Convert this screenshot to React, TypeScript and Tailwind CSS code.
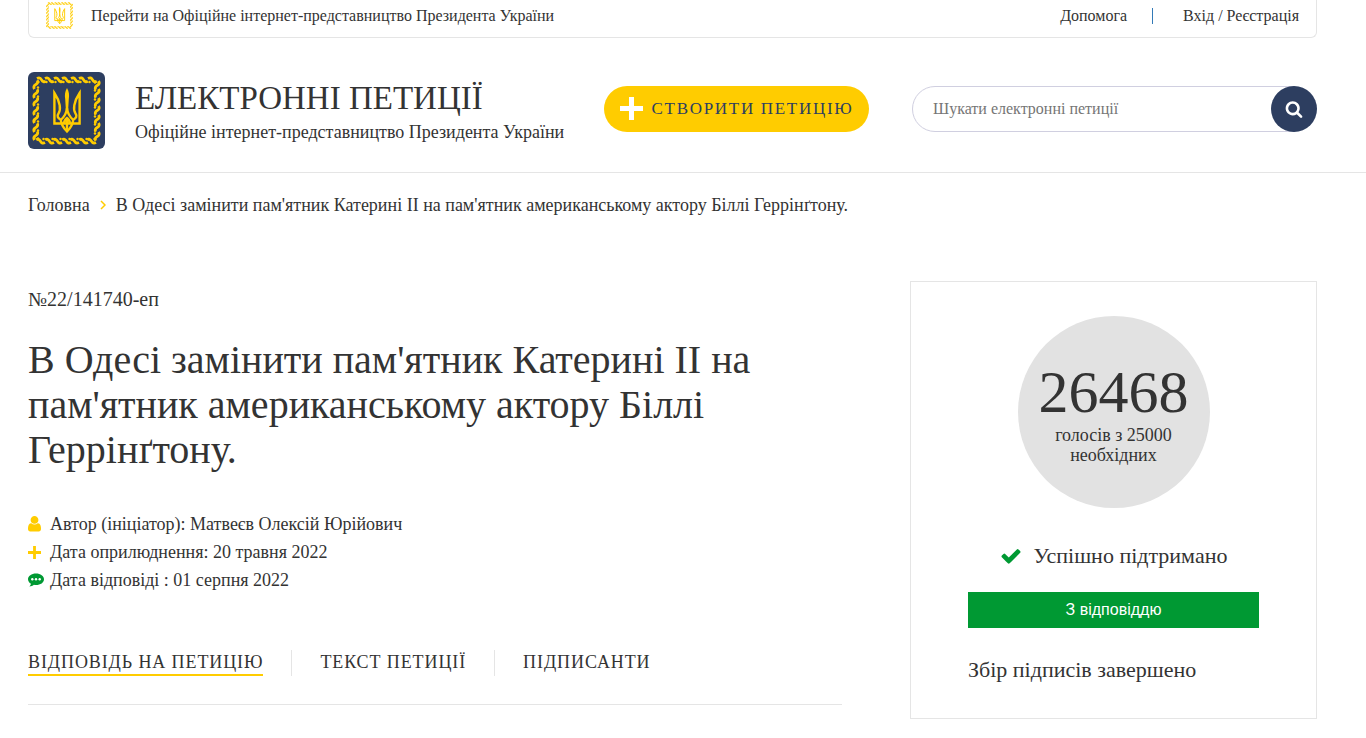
import type { ReactNode } from "react";

type IconProps = { className?: string };

// Leaf garland that runs along one side of the emblem frame
const LEAVES = [13, 21, 30, 38, 47, 55, 64];
const SIDES = [0, 90, 180, 270];

function Emblem({ className, viewBox = "0 0 77 77" }: IconProps & { viewBox?: string }) {
  return (
    <svg viewBox={viewBox} className={className} aria-hidden="true">
      {SIDES.map((side) => (
        <g key={side} transform={`rotate(${side} 38.5 38.5)`}>
          {LEAVES.map((x) => (
            <g key={x}>
              <path
                d={`M${x - 4} 6.4q3-1.600 4.600 1.400t4.200 1.400`}
                stroke="#fc0"
                strokeWidth="2.800"
                fill="none"
              />
              <circle cx={x - 2.5} cy="10" r="1.2" fill="#fc0" />
            </g>
          ))}
        </g>
      ))}
      <g fill="none" stroke="#fc0" strokeWidth="2.4" strokeLinejoin="miter">
        <path d="M32.5 47.5C30 46.5 28.6 44 30.5 41.5C33 38 32.5 30 26.4 21V51.5H34.5" />
        <path d="M45.5 47.5C48 46.5 49.4 44 47.5 41.5C45 38 45.5 30 51.6 21V51.5H43.5" />
        <path d="M39 36C38.5 42 35.5 45.5 32.8 47.8C33.2 52.5 35.5 56 39 59.5C42.5 56 44.8 52.5 45.2 47.8C42.5 45.5 39.5 42 39 36Z" />
        <path d="M33.5 51.5H44.5M39 46V59M36 51.5C36.2 48.5 37.5 47 39 46C40.5 47 41.8 48.5 42 51.5" />
      </g>
      <path
        d="M39 16C36.8 20 36.6 23 37.200 27L38 40H40L40.800 27C41.400 23 41.200 20 39 16Z"
        fill="#fc0"
      />
    </svg>
  );
}

function Glyph({
  d,
  className,
  viewBox = "0 0 1792 1792",
}: IconProps & { d: string; viewBox?: string }) {
  return (
    <svg viewBox={viewBox} fill="currentColor" className={className} aria-hidden="true">
      <path d={d} />
    </svg>
  );
}

const USER =
  "M1536 1399q0 109-62.5 187t-150.5 78h-854q-88 0-150.5-78t-62.5-187q0-85 8.5-160.5t31.5-152 58.5-131 94-89 134.5-34.5q131 128 313 128t313-128q76 0 134.5 34.5t94 89 58.5 131 31.5 152 8.5 160.5zm-256-887q0 159-112.5 271.5t-271.5 112.5-271.5-112.5-112.5-271.5 112.5-271.5 271.5-112.5 271.5 112.5 112.5 271.5z";
const SEARCH =
  "M1216 832q0-185-131.5-316.5t-316.5-131.5-316.5 131.5-131.5 316.5 131.5 316.5 316.5 131.5 316.5-131.5 131.5-316.5zm512 832q0 52-38 90t-90 38q-54 0-90-38l-343-342q-179 124-399 124-143 0-273.5-55.5t-225-150-150-225-55.5-273.5 55.5-273.5 150-225 225-150 273.5-55.5 273.5 55.5 225 150 150 225 55.5 273.5q0 220-124 399l343 343q37 37 37 90z";
const CHECK =
  "M1671 566q0 40-28 68l-724 724-136 136q-28 28-68 28t-68-28l-136-136-362-362q-28-28-28-68t28-68l136-136q28-28 68-28t68 28l294 295 656-657q28-28 68-28t68 28l136 136q28 28 28 68z";

function PlusIcon({ className }: IconProps) {
  return (
    <svg viewBox="0 0 23 23" fill="currentColor" className={className} aria-hidden="true">
      <path d="M9 0h5v9h9v5h-9v9H9v-9H0V9h9z" />
    </svg>
  );
}

function CommentIcon({ className }: IconProps) {
  return (
    <svg viewBox="0 0 16 14" className={className} aria-hidden="true">
      <path
        d="M8 .4C3.500.4 0 2.900 0 6.200c0 1.900 1.200 3.500 3 4.500-.3 1.200-.9 1.900-1.700 2.800 1.900-.1 3.500-.8 4.600-1.700.7.1 1.400.2 2.100.2 4.500 0 8-2.500 8-5.800S12.500.4 8 .4z"
        fill="#093"
      />
      <g fill="#fff">
        <circle cx="4.300" cy="6.200" r="1.200" />
        <circle cx="8" cy="6.200" r="1.200" />
        <circle cx="11.700" cy="6.200" r="1.200" />
      </g>
    </svg>
  );
}

function TopBar() {
  return (
    <div className="flex items-center rounded-b-md border border-t-0 border-[#e5e5e5] px-[17px] pt-0.5 pb-2 text-base">
      <a href="#president" className="flex items-center gap-[18px]">
        <Emblem className="size-[27px]" viewBox="4 4 69 69" />
        Перейти на Офіційне інтернет-представництво Президента України
      </a>
      <nav className="ml-auto flex items-center">
        <a href="#help">Допомога</a>
        <span className="mr-[30px] ml-[25px] h-4 w-px bg-[#337ab7]" />
        <a href="#login">Вхід / Реєстрація</a>
      </nav>
    </div>
  );
}

function Header() {
  return (
    <header className="border-b border-[#e5e5e5] pr-[49px] pl-7">
      <TopBar />
      <div className="flex items-center pt-[34px] pb-[23px]">
        <a href="#home" className="flex items-center gap-[30px]">
          <span className="rounded-md bg-[#2d3e60]">
            <Emblem className="size-[77px]" />
          </span>
          <span className="flex flex-col pt-1">
            <span className="text-[33px] leading-[38px]">ЕЛЕКТРОННІ ПЕТИЦІЇ</span>
            <span className="text-lg leading-[30px]">
              Офіційне інтернет-представництво Президента України
            </span>
          </span>
        </a>
        <div className="ml-auto flex items-center gap-[43px] pb-1">
          <button
            type="button"
            className="flex h-[46px] w-[265px] items-center justify-center gap-[9px] rounded-full bg-[#fc0] text-[17px] tracking-widest text-[#2d3e60]"
          >
            <PlusIcon className="size-[23px] text-white" />
            СТВОРИТИ ПЕТИЦІЮ
          </button>
          <form role="search" className="flex h-[46px] w-[405px] items-center">
            <input
              type="text"
              aria-label="Шукати електронні петиції"
              placeholder="Шукати електронні петиції"
              className="-mr-[23px] h-full min-w-0 flex-1 rounded-l-full border border-[#d0cfe0] pl-5 text-base placeholder:text-[#757575]"
            />
            <button
              type="submit"
              aria-label="Пошук"
              className="relative flex size-[46px] items-center justify-center rounded-full bg-[#2d3e60] text-white"
            >
              <Glyph d={SEARCH} className="size-[18px]" />
            </button>
          </form>
        </div>
      </div>
    </header>
  );
}

function MetaRow({ icon, children }: { icon: ReactNode; children: ReactNode }) {
  return (
    <li className="flex items-center gap-1.5">
      <span className="flex w-4">{icon}</span>
      {children}
    </li>
  );
}

const TABS = [
  { id: "answer", label: "ВІДПОВІДЬ НА ПЕТИЦІЮ", active: true },
  { id: "text", label: "ТЕКСТ ПЕТИЦІЇ", active: false },
  { id: "signers", label: "ПІДПИСАНТИ", active: false },
];

function Petition() {
  return (
    <article>
      <p className="pt-1 text-xl leading-7">№22/141740-еп</p>
      <h1 className="pt-6 text-[40px] leading-[45px]">
        В Одесі замінити пам'ятник Катерині II на пам'ятник американському
        актору Біллі Геррінґтону.
      </h1>
      <ul className="pt-[38px] text-lg leading-7">
        <MetaRow
          icon={
            <Glyph d={USER} viewBox="256 128 1280 1536" className="w-[13px] text-[#fc0]" />
          }
        >
          Автор (ініціатор): Матвеєв Олексій Юрійович
        </MetaRow>
        <MetaRow icon={<PlusIcon className="size-[13px] text-[#fc0]" />}>
          Дата оприлюднення: 20 травня 2022
        </MetaRow>
        <MetaRow icon={<CommentIcon className="w-4" />}>
          Дата відповіді : 01 серпня 2022
        </MetaRow>
      </ul>
      <nav className="mt-14 flex border-b border-[#e5e5e5] pb-7 text-lg leading-6 tracking-wider">
        {TABS.map((tab) => (
          <div
            key={tab.id}
            className="mr-7 border-r border-[#e5e5e5] pr-7 last:mr-0 last:border-0 last:pr-0"
          >
            <a
              href={`#${tab.id}`}
              className={
                tab.active
                  ? "block border-b-2 border-[#fc0]"
                  : "block border-b-2 border-transparent"
              }
            >
              {tab.label}
            </a>
          </div>
        ))}
      </nav>
    </article>
  );
}

function VotesCard() {
  return (
    <aside className="border border-[#e5e5e5] px-[57px] pt-[34px] pb-8">
      <div className="mx-auto flex size-48 flex-col items-center justify-center rounded-full bg-[#e2e2e2] text-center">
        <span className="text-[60px] leading-[66px]">26468</span>
        <span className="text-lg leading-5">
          голосів з 25000
          <br />
          необхідних
        </span>
      </div>
      <p className="mt-8 flex items-center justify-center gap-3 text-[22px] leading-8">
        <Glyph d={CHECK} className="size-[22px] text-[#093]" />
        Успішно підтримано
      </p>
      <a
        href="#answer"
        className="mt-5 block bg-[#093] text-center font-['Liberation_Sans',sans-serif] text-base leading-9 text-white"
      >
        З відповіддю
      </a>
      <p className="mt-[26px] text-[22px] leading-8">Збір підписів завершено</p>
    </aside>
  );
}

export default function App() {
  return (
    <div className="min-h-screen bg-white font-['Liberation_Serif',serif] text-[#333]">
      <Header />
      <main className="pt-[18px] pr-[49px] pl-7">
        <nav className="flex items-center text-lg leading-7">
          <a href="#home">Головна</a>
          <svg
            viewBox="0 0 6 10"
            className="mx-2.5 h-2.5 w-1.5"
            fill="none"
            stroke="#fc0"
            strokeWidth="1.5"
            aria-hidden="true"
          >
            <path d="M1 1l4 4-4 4" />
          </svg>
          <span>
            В Одесі замінити пам'ятник Катерині II на пам'ятник американському
            актору Біллі Геррінґтону.
          </span>
        </nav>
        <div className="grid grid-cols-[2fr_1fr] items-start gap-[68px] pt-[62px]">
          <Petition />
          <VotesCard />
        </div>
      </main>
    </div>
  );
}
